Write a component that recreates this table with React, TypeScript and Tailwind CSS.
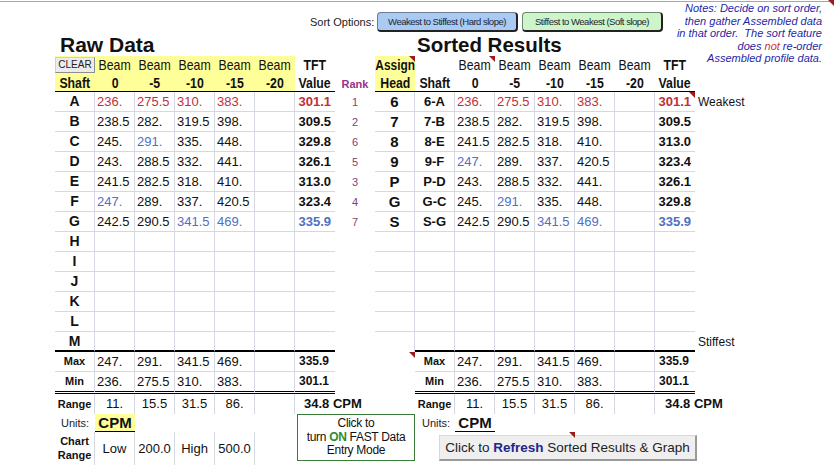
import React from "react";

const sans = "font-['Liberation_Sans',Arial,Helvetica,sans-serif]";
const yellow = "bg-[#ffff99]";
const gl = "border-[#d5d8e0]";

const rawRows = [
  ["A", "!236.", "!275.5", "!310.", "!383.", "!301.1", "1"],
  ["B", "238.5", "282.", "319.5", "398.", "309.5", "2"],
  ["C", "245.", "~291.", "335.", "448.", "329.8", "6"],
  ["D", "243.", "288.5", "332.", "441.", "326.1", "5"],
  ["E", "241.5", "282.5", "318.", "410.", "313.0", "3"],
  ["F", "~247.", "289.", "337.", "420.5", "323.4", "4"],
  ["G", "242.5", "290.5", "~341.5", "~469.", "~335.9", "7"],
  ["H", "", "", "", "", "", ""],
  ["I", "", "", "", "", "", ""],
  ["J", "", "", "", "", "", ""],
  ["K", "", "", "", "", "", ""],
  ["L", "", "", "", "", "", ""],
  ["M", "", "", "", "", "", ""],
];

const sortedRows = [
  ["6", "6-A", "!236.", "!275.5", "!310.", "!383.", "!301.1", "Weakest"],
  ["7", "7-B", "238.5", "282.", "319.5", "398.", "309.5", ""],
  ["8", "8-E", "241.5", "282.5", "318.", "410.", "313.0", ""],
  ["9", "9-F", "~247.", "289.", "337.", "420.5", "323.4", ""],
  ["P", "P-D", "243.", "288.5", "332.", "441.", "326.1", ""],
  ["G", "G-C", "245.", "~291.", "335.", "448.", "329.8", ""],
  ["S", "S-G", "242.5", "290.5", "~341.5", "~469.", "~335.9", ""],
  ["", "", "", "", "", "", "", ""],
  ["", "", "", "", "", "", "", ""],
  ["", "", "", "", "", "", "", ""],
  ["", "", "", "", "", "", "", ""],
  ["", "", "", "", "", "", "", ""],
  ["", "", "", "", "", "", "", "Stiffest"],
];

// "!" marks a red value, "~" a blue one
function tone(s: string) {
  if (s.startsWith("!")) return { text: s.slice(1), cls: "text-[#c0303a]" };
  if (s.startsWith("~")) return { text: s.slice(1), cls: "text-[#4f6fc4]" };
  return { text: s, cls: "text-[#111]" };
}

function Tri(props: { className?: string }) {
  return (
    <span
      className={
        "absolute w-0 h-0 border-l-[6px] border-l-transparent border-t-[6px] border-t-[#9b1c1c] " +
        (props.className || "top-0 right-0")
      }
    ></span>
  );
}

// Arial Narrow look-alike
function N(props: { children: React.ReactNode }) {
  return <span className="inline-block shrink-0 scale-x-[0.82] whitespace-nowrap">{props.children}</span>;
}

const head = "flex justify-center w-[40px] shrink-0";

function Num(props: { v: string; bottom: string }) {
  const t = tone(props.v);
  return (
    <div
      className={`w-[40px] shrink-0 border-r ${props.bottom} ${gl} pl-[2px] text-[13px] leading-[19px] whitespace-nowrap ${t.cls}`}
    >
      {t.text}
    </div>
  );
}

function Tft(props: { v: string; bottom: string; tri?: boolean }) {
  const t = tone(props.v);
  return (
    <div
      className={`relative w-[40px] shrink-0 ${props.bottom} ${gl} pr-[4px] text-right text-[13px] font-bold leading-[19px] ${t.cls}`}
    >
      {t.text}
      {props.tri && <Tri />}
    </div>
  );
}

function DataRow(props: { left: string[]; right: string[]; index: number }) {
  const last = props.index === rawRows.length - 1;
  const lb = last ? "border-b-2 border-b-black" : "border-b";
  return (
    <div className="flex h-[20px]">
      <div className="w-[55px] shrink-0"></div>
      <div className={`w-[40px] shrink-0 border-r ${lb} ${gl} text-center text-[14px] font-bold leading-[19px]`}>
        {props.left[0]}
      </div>
      <Num v={props.left[1]} bottom={lb} />
      <Num v={props.left[2]} bottom={lb} />
      <Num v={props.left[3]} bottom={lb} />
      <Num v={props.left[4]} bottom={lb} />
      <Num v="" bottom={lb} />
      <Tft v={props.left[5]} bottom={lb} />
      <div className="w-[40px] shrink-0 text-center text-[11px] leading-[20px] text-[#7f3f7f]">{props.left[6]}</div>
      <div className={`w-[40px] shrink-0 border-r ${last ? "" : "border-b"} ${gl} text-center text-[15px] font-bold leading-[19px]`}>
        {props.right[0]}
      </div>
      <div className={`w-[40px] shrink-0 border-r ${lb} ${gl} text-center text-[13px] font-bold leading-[19px]`}>
        {props.right[1]}
      </div>
      <Num v={props.right[2]} bottom={lb} />
      <Num v={props.right[3]} bottom={lb} />
      <Num v={props.right[4]} bottom={lb} />
      <Num v={props.right[5]} bottom={lb} />
      <Num v="" bottom={lb} />
      <Tft v={props.right[6]} bottom={lb} tri={props.index === 0} />
      <div className="pl-[3px] text-[12px] leading-[20px] text-[#111] whitespace-nowrap">{props.right[7]}</div>
    </div>
  );
}

function StatRow(props: { label: string; vals: string[]; tft: string; bottom: string; tri?: boolean; h: string }) {
  const label = `w-[40px] shrink-0 border-r ${props.bottom} ${gl} text-center text-[11px] font-bold leading-[19px]`;
  const cells = props.vals.map((v, i) => (
    <div key={i} className={`w-[40px] shrink-0 border-r ${props.bottom} ${gl} pl-[2px] text-[13px] leading-[19px]`}>
      {v}
    </div>
  ));
  const tft = (
    <div className={`w-[40px] shrink-0 ${props.bottom} ${gl} pr-[6px] text-right text-[12px] font-bold leading-[19px]`}>
      {props.tft}
    </div>
  );
  return (
    <div className={`flex ${props.h}`}>
      <div className="w-[55px] shrink-0"></div>
      <div className={label}>{props.label}</div>
      {cells}
      {tft}
      <div className="w-[40px] shrink-0"></div>
      <div className="relative w-[40px] shrink-0">{props.tri && <Tri />}</div>
      <div className={label}>{props.label}</div>
      {cells}
      {tft}
    </div>
  );
}

function RangeCells() {
  return (
    <React.Fragment>
      <div className={`w-[40px] shrink-0 border-r ${gl} text-center text-[11px] font-bold leading-[20px]`}>Range</div>
      {["11.", "15.5", "31.5", "86.", ""].map((v, i) => (
        <div key={i} className={`w-[40px] shrink-0 border-r ${gl} text-center text-[13px] leading-[20px]`}>
          {v}
        </div>
      ))}
    </React.Fragment>
  );
}

export default function App() {
  const beams = ["0", "-5", "-10", "-15", "-20"];
  return (
    <div className={`relative w-[834px] h-[473px] bg-white overflow-hidden text-[#111] ${sans}`}>
      <div className="h-px mt-px bg-[#a6a6a6]"></div>
      <Tri className="top-0 right-0" />

      {/* notes text box */}
      <div className="absolute top-[2px] right-[12px] w-[180px] text-right text-[11px] italic leading-[12.6px] text-[#1f1fa5]">
        Notes: Decide on sort order,
        <br />
        then gather Assembled data
        <br />
        in that order.&nbsp; The sort feature
        <br />
        does <span className="text-[#d03030]">not</span> re-order
        <br />
        Assembled profile data.
      </div>

      {/* sort options */}
      <div className="flex h-[31px] pt-[10px] pl-[310px]">
        <span className="w-[67px] text-[11px] leading-[20px] text-[#222]">Sort Options:</span>
        <div className="w-[141px] h-[20px] rounded-[4px] border border-[#6d7d90] border-r-2 border-b-2 border-r-[#222] border-b-[#222] bg-[#a9caf2] text-center text-[9.5px] tracking-[-0.5px] leading-[17px] text-[#1c2633]">
          Weakest to Stiffest (Hard slope)
        </div>
        <div className="ml-[4px] w-[141px] h-[20px] rounded-[4px] border border-[#6d8a70] border-r-2 border-b-2 border-r-[#222] border-b-[#222] bg-[#cdf5c9] text-center text-[9.5px] tracking-[-0.5px] leading-[17px] text-[#1c2633]">
          Stiffest to Weakest (Soft slope)
        </div>
      </div>

      {/* titles */}
      <div className="flex h-[23px] items-end">
        <div className="w-[417px] shrink-0 pl-[60px] text-[21px] font-bold leading-[23px]">Raw Data</div>
        <div className="text-[20.5px] font-bold leading-[23px]">Sorted Results</div>
      </div>

      {/* header row 1 */}
      <div className="flex h-[18px] text-[15px] leading-[18px]">
        <div className="w-[55px] shrink-0"></div>
        <div className={`w-[40px] shrink-0 ${yellow} pt-px`}>
          <div className="w-[40px] h-[16px] bg-[#ececec] border border-[#d0d0d0] border-r-[#8e8e8e] border-b-[#8e8e8e] text-center text-[10px] leading-[14px] text-[#222]">
            CLEAR
          </div>
        </div>
        {beams.map((b) => (
          <div key={b} className={`${head} ${yellow}`}>
            <N>Beam</N>
          </div>
        ))}
        <div className={`${head} font-bold`}>
          <N>TFT</N>
        </div>
        <div className="w-[40px] shrink-0"></div>
        <div className={`relative ${head} ${yellow} font-bold text-[14.5px]`}>
          <N>Assign</N>
          <Tri />
        </div>
        <div className="w-[40px] shrink-0"></div>
        {beams.map((b, i) => (
          <div key={b} className={`relative ${head}`}>
            <N>Beam</N>
            {i === 0 && <Tri className="top-0 right-0" />}
          </div>
        ))}
        <div className={`${head} font-bold`}>
          <N>TFT</N>
        </div>
      </div>

      {/* header row 2 */}
      <div className="flex h-[18px] text-[15px] font-bold leading-[17px]">
        <div className="w-[55px] shrink-0"></div>
        <div className={`${head} ${yellow} border-b border-black`}>
          <N>Shaft</N>
        </div>
        {beams.map((b) => (
          <div key={b} className={`${head} ${yellow} border-b border-black`}>
            <N>{b}</N>
          </div>
        ))}
        <div className={`${head} border-b border-black`}>
          <N>Value</N>
        </div>
        <div className="w-[40px] shrink-0 pt-[3px] text-center text-[11px] leading-[14px] text-[#93338f]">Rank</div>
        <div className={`${head} ${yellow} border-b border-black`}>
          <N>Head</N>
        </div>
        <div className={`${head} border-b border-black`}>
          <N>Shaft</N>
        </div>
        {beams.map((b) => (
          <div key={b} className={`${head} border-b border-black`}>
            <N>{b}</N>
          </div>
        ))}
        <div className={`${head} border-b border-black`}>
          <N>Value</N>
        </div>
      </div>

      {/* data rows */}
      {rawRows.map((r, i) => (
        <DataRow key={i} index={i} left={r} right={sortedRows[i]} />
      ))}

      <StatRow label="Max" vals={["247.", "291.", "341.5", "469.", ""]} tft="335.9" bottom="border-b" tri h="h-[20px]" />
      <StatRow
        label="Min"
        vals={["236.", "275.5", "310.", "383.", ""]}
        tft="301.1"
        bottom="border-b-[3px] border-double border-b-black"
        h="h-[22px]"
      />

      {/* range */}
      <div className="flex h-[20px]">
        <div className="w-[55px] shrink-0"></div>
        <RangeCells />
        <div className="w-[40px] shrink-0 pl-[9px] text-[13px] font-bold leading-[20px] whitespace-nowrap">34.8 CPM</div>
        <div className="w-[40px] shrink-0"></div>
        <div className="w-[40px] shrink-0"></div>
        <RangeCells />
        <div className="w-[40px] shrink-0 pl-[10px] text-[13px] font-bold leading-[20px] whitespace-nowrap">34.8 CPM</div>
      </div>

      {/* units, chart range, buttons */}
      <div className="flex h-[51px]">
        <div className="w-[55px] shrink-0"></div>
        <div className="flex w-[240px] shrink-0 flex-col">
          <div className="flex h-[18px]">
            <div className="w-[40px] text-center text-[11px] leading-[18px] text-[#222]">Units:</div>
            <div className={`w-[40px] ${yellow} border-b border-black text-center text-[15px] font-bold leading-[17px]`}>CPM</div>
          </div>
          <div className="flex h-[33px]">
            <div className={`flex w-[40px] flex-col justify-center border-r ${gl} text-center text-[11px] font-bold leading-[13.5px]`}>
              <span>Chart</span>
              <span>Range</span>
            </div>
            {["Low", "200.0", "High", "500.0", ""].map((v, i) => (
              <div key={i} className={`w-[40px] ${i < 4 ? "border-r" : ""} ${gl} text-center text-[13px] leading-[33px]`}>
                {v}
              </div>
            ))}
          </div>
        </div>
        <div className="ml-[2px] flex h-[47px] w-[118px] shrink-0 flex-col items-center justify-center border border-[#3a7d3a] text-[12px] leading-[13.5px] tracking-[-0.3px]">
          <span>Click to</span>
          <span>
            turn <b className="text-[#2e8b2e]">ON</b> FAST Data
          </span>
          <span>Entry Mode</span>
        </div>
        <div className="relative flex flex-col">
          <div className="flex h-[18px]">
            <div className="w-[40px] pl-[7px] text-[11px] leading-[18px] text-[#222]">Units:</div>
            <div className="w-[40px] border-b border-black text-center text-[15px] font-bold leading-[17px]">CPM</div>
          </div>
          <div className="ml-[24px] mt-[3px] h-[26px] w-[258px] border border-[#d8d8d8] border-r-2 border-b-2 border-r-[#9a9a9a] border-b-[#9a9a9a] bg-[#efefef] text-center text-[13.5px] leading-[23px] text-[#222]">
            Click to <b className="text-[#26268a]">Refresh</b> Sorted Results &amp; Graph
          </div>
          <Tri className="left-[154px] top-[18px]" />
        </div>
      </div>
    </div>
  );
}
